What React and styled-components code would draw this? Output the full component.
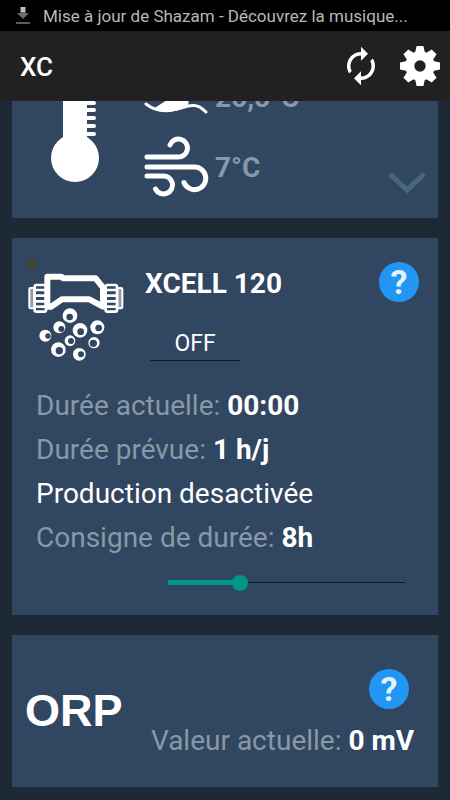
import React, { useState } from "react";
import styled, { createGlobalStyle } from "styled-components";
import { MdAutorenew } from "react-icons/md";

const GlobalStyle = createGlobalStyle`
  * {
    box-sizing: border-box;
  }

  body {
    margin: 0;
    background: #1d2935;
    font-family: Roboto, "Liberation Sans", sans-serif;
    color: #ffffff;
  }

  button {
    padding: 0;
    border: none;
    background: none;
    color: inherit;
    font-family: inherit;
    cursor: pointer;
  }

  svg {
    display: block;
  }
`;

const GEAR_ANGLES = [0, 45, 90, 135, 180, 225, 270, 315];

const BUBBLES = [
  { x: 149, y: 181, r: 22, hx: 148, hy: 185, hr: 10 },
  { x: 117, y: 216, r: 18, hx: 123, hy: 221, hr: 9 },
  { x: 75, y: 241, r: 18, hx: 83, hy: 242, hr: 8 },
  { x: 179, y: 225, r: 22, hx: 181, hy: 229, hr: 10 },
  { x: 231, y: 216, r: 21, hx: 235, hy: 218, hr: 10 },
  { x: 149, y: 256, r: 16, hx: 152, hy: 257, hr: 9 },
  { x: 221, y: 262, r: 17, hx: 219, hy: 264, hr: 11 },
  { x: 114, y: 283, r: 22, hx: 117, hy: 286, hr: 11 },
  { x: 177, y: 297, r: 19, hx: 182, hy: 297, hr: 9 },
];

const DownloadIcon = () => (
  <svg width="14" height="18" viewBox="0 0 14 18" aria-hidden="true">
    <path d="M4.500 0H9.500V5H4.500z" fill="#bdbdbd" />
    <path d="M4.500 5H9.500V6H13L7 12L1 6H4.500z" fill="#6a6a6a" />
    <path d="M0 15H14V17H0z" fill="#5a5a5a" />
  </svg>
);

const GearIcon = () => (
  <svg width="40" height="40" viewBox="-20 -20 40 40" aria-hidden="true">
    <circle r="10.2" fill="none" stroke="#fff" strokeWidth="9" />
    {GEAR_ANGLES.map((angle) => (
      <path
        key={angle}
        d="M-5 -13L-3.400 -20H3.400L5 -13z"
        fill="#fff"
        transform={`rotate(${angle})`}
      />
    ))}
  </svg>
);

const ThermometerIcon = () => (
  <svg width="48" height="140" viewBox="0 0 48 140" aria-hidden="true">
    <g fill="#fff">
      <circle cx="24" cy="116" r="24" />
      <path d="M12 12A12 12 0 0 1 36 12V100H12z" />
    </g>
    <path
      d="M34 29H43M34 37H43M34 45H43M34 53H43M34 61H43M34 68H43M34 76H43M34 84H43M34 92H43"
      stroke="#fff"
      strokeWidth="4"
      strokeLinecap="round"
    />
  </svg>
);

const WaterIcon = () => (
  <svg width="66" height="62" viewBox="0 0 66 62" aria-hidden="true">
    <path d="M9 43L23 34L18 22L34 10L45 32L44 41Q26 49 9 43z" fill="#fff" />
    <path
      d="M2 38C12 46 24 46 36 42S54 38 62 46"
      fill="none"
      stroke="#fff"
      strokeWidth="3"
      strokeLinecap="round"
    />
  </svg>
);

const WindIcon = () => (
  <svg width="66" height="62" viewBox="0 -1 66 62" aria-hidden="true">
    <g fill="none" stroke="#fff" strokeWidth="5" strokeLinecap="round">
      <path d="M3 20H33.500A9 9 0 1 0 26 8" />
      <path d="M3 30H50.500A11.300 11.300 0 1 1 40 45.500" />
      <path d="M3 39H18.500A9 9 0 1 1 11.500 52" />
    </g>
  </svg>
);

const ChevronIcon = () => (
  <svg width="38" height="22" viewBox="0 0 38 22" aria-hidden="true">
    <path
      d="M2 2L19 18L36 2"
      fill="none"
      stroke="#48677f"
      strokeWidth="5"
    />
  </svg>
);

const CellIcon = () => (
  <svg width="98" height="90" viewBox="20 50 294 270" aria-hidden="true">
    <g fill="none" stroke="#fff">
      <path
        d="M81 154V64H122L130 69H226L248 97V154L207 132H125L92 154z"
        strokeWidth="18"
        strokeLinejoin="round"
      />
      <g strokeWidth="6">
        <rect x="27" y="98" width="15" height="61" rx="4" fill="#8e9bab" />
        <rect x="291" y="98" width="15" height="61" rx="4" fill="#8e9bab" />
      </g>
      <g strokeWidth="8">
        <rect x="43" y="89" width="34" height="80" rx="5" />
        <rect x="256" y="89" width="34" height="80" rx="5" />
      </g>
      <path
        d="M43 104H77M43 121H77M43 138H77M43 154H77M256 104H290M256 121H290M256 138H290M256 154H290"
        strokeWidth="8"
      />
    </g>
    {BUBBLES.map((b) => (
      <g key={`${b.x}-${b.y}`}>
        <circle cx={b.x} cy={b.y} r={b.r} fill="#fff" />
        <circle cx={b.hx} cy={b.hy} r={b.hr} fill="#314660" />
      </g>
    ))}
  </svg>
);

const App = () => {
  const [on, setOn] = useState(false);
  const [hours, setHours] = useState(8);

  return (
    <Screen>
      <GlobalStyle />
      <StatusBar>
        <DownloadIcon />
        <StatusText>Mise à jour de Shazam - Découvrez la musique...</StatusText>
      </StatusBar>
      <AppBar>
        <AppTitle>XC</AppTitle>
        <IconButton aria-label="Actualiser">
          <MdAutorenew size={42} />
        </IconButton>
        <IconButton aria-label="Paramètres">
          <GearIcon />
        </IconButton>
      </AppBar>

      {/* column-reverse keeps the list scrolled to its end */}
      <Scroller>
        <List>
          <WeatherCard>
            <ThermometerIcon />
            <Measures>
              <Measure>
                <WaterIcon />
                26,5°C
              </Measure>
              <Measure>
                <WindIcon />
                7°C
              </Measure>
            </Measures>
            <ExpandButton aria-label="Afficher plus">
              <ChevronIcon />
            </ExpandButton>
          </WeatherCard>

          <CellCard>
            <StatusDot />
            <CellHead>
              <CellPicture>
                <CellIcon />
              </CellPicture>
              <div>
                <CellTitle>XCELL 120</CellTitle>
                <PowerButton aria-pressed={on} onClick={() => setOn(!on)}>
                  {on ? "ON" : "OFF"}
                </PowerButton>
              </div>
              <HelpButton aria-label="Aide XCELL">?</HelpButton>
            </CellHead>
            <Details>
              <Line>
                Durée actuelle: <Value>00:00</Value>
              </Line>
              <Line>
                Durée prévue: <Value>1 h/j</Value>
              </Line>
              <Line $bright>Production desactivée</Line>
              <Line>
                <label htmlFor="duration">Consigne de durée:</label>{" "}
                <Value>{hours}h</Value>
              </Line>
              <Slider
                id="duration"
                type="range"
                min="1"
                max="24"
                value={hours}
                $fill={(hours - 1) / 23}
                onChange={(e) => setHours(Number(e.target.value))}
              />
            </Details>
          </CellCard>

          <OrpCard>
            <OrpTitle>ORP</OrpTitle>
            <OrpSide>
              <HelpButton aria-label="Aide ORP">?</HelpButton>
              <Line>
                Valeur actuelle: <Value>0 mV</Value>
              </Line>
            </OrpSide>
          </OrpCard>
        </List>
      </Scroller>
    </Screen>
  );
};

const Screen = styled.div`
  display: flex;
  flex-direction: column;
  height: 100vh;
`;

const StatusBar = styled.div`
  display: flex;
  align-items: center;
  flex: none;
  gap: 13px;
  height: 31px;
  padding: 0 16px;
  background: #000000;
`;

const StatusText = styled.span`
  font-size: 17px;
  line-height: 24px;
  white-space: nowrap;
  color: #b8b8b8;
`;

const AppBar = styled.header`
  display: flex;
  align-items: center;
  flex: none;
  gap: 18px;
  height: 70px;
  padding: 0 10px 0 20px;
  background: #212121;
`;

const AppTitle = styled.h1`
  flex: 1;
  margin: 0;
  padding-top: 2px;
  font-size: 26px;
  font-weight: 500;
  line-height: 32px;
`;

const IconButton = styled.button`
  display: flex;
`;

const Scroller = styled.main`
  display: flex;
  flex-direction: column-reverse;
  flex: 1;
  min-height: 0;
  overflow-y: auto;
  scrollbar-width: none;
`;

const List = styled.div`
  display: flex;
  flex-direction: column;
  gap: 20px;
  padding: 12px 12px 13px;
`;

const Card = styled.section`
  background: #314660;
`;

const WeatherCard = styled(Card)`
  display: flex;
  align-items: flex-start;
  padding: 16px 12px 16px 39px;

  > svg {
    margin-top: -20px;
  }
`;

const Measures = styled.div`
  flex: 1;
  margin-left: 45px;
`;

const Measure = styled.div`
  display: flex;
  align-items: center;
  gap: 5px;
  height: 70px;
  font-size: 28px;
  font-weight: 700;
  color: #8799a6;
`;

const ExpandButton = styled.button`
  align-self: flex-end;
  padding: 8px 0;
`;

const CellCard = styled(Card)`
  position: relative;
  padding: 24px 19px 20px 15px;
`;

const StatusDot = styled.span`
  position: absolute;
  top: 20px;
  left: 13px;
  width: 13px;
  height: 13px;
  border-radius: 50%;
  background: #424242;
`;

const CellHead = styled.div`
  display: grid;
  grid-template-columns: auto 1fr auto;
  align-items: start;
  column-gap: 20px;
`;

const CellPicture = styled.div`
  padding-top: 10px;
`;

const CellTitle = styled.h2`
  margin: 0;
  font-size: 28px;
  font-weight: 700;
  line-height: 44px;
`;

const PowerButton = styled.button`
  display: block;
  width: 90px;
  height: 35px;
  margin: 20px 0 0 5px;
  border-bottom: 1px solid #14191f;
  font-size: 23px;
`;

const HelpButton = styled.button`
  width: 40px;
  height: 40px;
  border-radius: 50%;
  background: #2196f3;
  color: #e3f2fd;
  font-size: 34px;
  font-weight: 700;
  line-height: 40px;
`;

const Details = styled.div`
  display: flex;
  flex-direction: column;
  padding: 22px 6px 0 9px;
`;

const Line = styled.p`
  margin: 0;
  font-size: 28px;
  line-height: 44px;
  white-space: nowrap;
  color: ${({ $bright }) => ($bright ? "#ffffff" : "#8799a6")};
`;

const Value = styled.strong`
  font-weight: 700;
  color: #ffffff;
`;

const Slider = styled.input`
  appearance: none;
  align-self: flex-end;
  width: 67%;
  height: 24px;
  margin: 11px 0 0;
  background: none;

  &::-webkit-slider-runnable-track {
    height: 16px;
    background-image: linear-gradient(#009688, #009688),
      linear-gradient(#14191f, #14191f);
    background-repeat: no-repeat;
    background-position: 8px 5px, 8px 7px;
    background-size: calc((100% - 16px) * ${({ $fill }) => $fill}) 5px,
      calc(100% - 16px) 1px;
  }

  &::-webkit-slider-thumb {
    appearance: none;
    width: 16px;
    height: 16px;
    border-radius: 50%;
    background: #009688;
  }
`;

const OrpCard = styled(Card)`
  display: flex;
  align-items: center;
  justify-content: space-between;
  padding: 24px 24px 24px 13px;
`;

const OrpTitle = styled.h2`
  margin: 0;
  font-family: "Liberation Sans", Arial, sans-serif;
  font-size: 45px;
  font-weight: 700;
  line-height: 44px;
`;

const OrpSide = styled.div`
  display: flex;
  flex-direction: column;
  align-items: flex-end;
  gap: 10px;
  padding-top: 10px;

  ${HelpButton} {
    margin-right: 5px;
  }
`;

export default App;
